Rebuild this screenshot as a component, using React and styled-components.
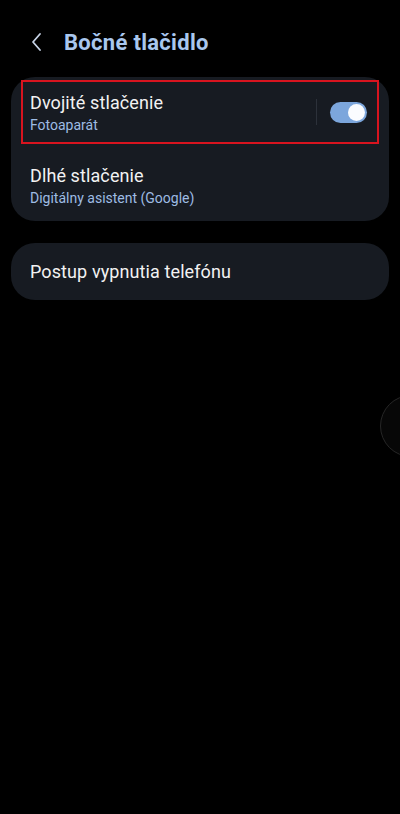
import React, { useState } from "react";
import styled, { createGlobalStyle } from "styled-components";

const GlobalStyle = createGlobalStyle`
  html, body {
    margin: 0;
    padding: 0;
    background: #000;
  }
  body {
    font-family: Roboto, "Noto Sans", sans-serif;
  }
`;

const Screen = styled.div`
  position: relative;
  width: 400px;
  height: 814px;
  background: #000;
  overflow: hidden;
  padding: 0 11px;
  box-sizing: border-box;
`;

const Header = styled.div`
  display: flex;
  align-items: center;
  height: 44px;
  margin-top: 20px;
  margin-bottom: 13px;
  padding-left: 19px;
  gap: 20px;
`;

const Title = styled.h1`
  margin: 0;
  font-size: 22px;
  font-weight: 700;
  color: #a9c7ee;
  letter-spacing: 0.3px;
`;

const Card = styled.div`
  background: #171b22;
  border-radius: 24px;
  display: flex;
  flex-direction: column;
  padding: ${(p) => p.$pad || "3px 0"};
  margin-bottom: 22px;
`;

const Row = styled.div`
  display: flex;
  align-items: center;
  margin: 0 10px;
  padding: ${(p) => p.$top || 0}px 7px 0;
  height: ${(p) => p.$h || 64}px;
  box-sizing: border-box;
  border: 2px solid ${(p) => (p.$marked ? "#d8141f" : "transparent")};
`;

const Texts = styled.div`
  flex: 1;
  display: flex;
  flex-direction: column;
  gap: 4px;
`;

const Label = styled.div`
  font-size: 18px;
  color: #f2f2f2;
  letter-spacing: 0.1px;
`;

const Sub = styled.div`
  font-size: 14px;
  color: #9ebce4;
`;

const Divider = styled.div`
  width: 1px;
  height: 26px;
  background: #2c313a;
  margin-right: 13px;
`;

const Track = styled.button`
  width: 37px;
  height: 21px;
  border-radius: 11px;
  border: none;
  padding: 2px;
  background: ${(p) => (p.$on ? "#7ca6dc" : "#4a4f57")};
  display: flex;
  justify-content: ${(p) => (p.$on ? "flex-end" : "flex-start")};
  align-items: center;
  cursor: pointer;
  margin-right: 3px;
  box-sizing: border-box;
`;

const Thumb = styled.span`
  width: 17px;
  height: 17px;
  border-radius: 50%;
  background: #fafcff;
`;

const EdgeHandle = styled.div`
  position: absolute;
  right: -42px;
  top: 395px;
  width: 60px;
  height: 60px;
  border-radius: 50%;
  border: 1px solid #262626;
  background: #070707;
`;

const BackIcon = () => (
  <svg width="14" height="22" viewBox="0 0 14 22">
    <path
      d="M10 3 L3 11 L10 19"
      fill="none"
      stroke="#c7d3e6"
      strokeWidth="1.8"
      strokeLinecap="round"
      strokeLinejoin="round"
    />
  </svg>
);

export default function App() {
  const [on, setOn] = useState(true);

  return (
    <Screen>
      <GlobalStyle />
      <Header>
        <BackIcon />
        <Title>Bočné tlačidlo</Title>
      </Header>

      <Card>
        <Row $marked>
          <Texts>
            <Label>Dvojité stlačenie</Label>
            <Sub>Fotoaparát</Sub>
          </Texts>
          <Divider />
          <Track $on={on} onClick={() => setOn(!on)}>
            <Thumb />
          </Track>
        </Row>
        <Row $h={74} $top={8}>
          <Texts>
            <Label>Dlhé stlačenie</Label>
            <Sub>Digitálny asistent (Google)</Sub>
          </Texts>
        </Row>
      </Card>

      <Card $pad="0">
        <Row $h={57}>
          <Texts>
            <Label>Postup vypnutia telefónu</Label>
          </Texts>
        </Row>
      </Card>

      <EdgeHandle />
    </Screen>
  );
}
